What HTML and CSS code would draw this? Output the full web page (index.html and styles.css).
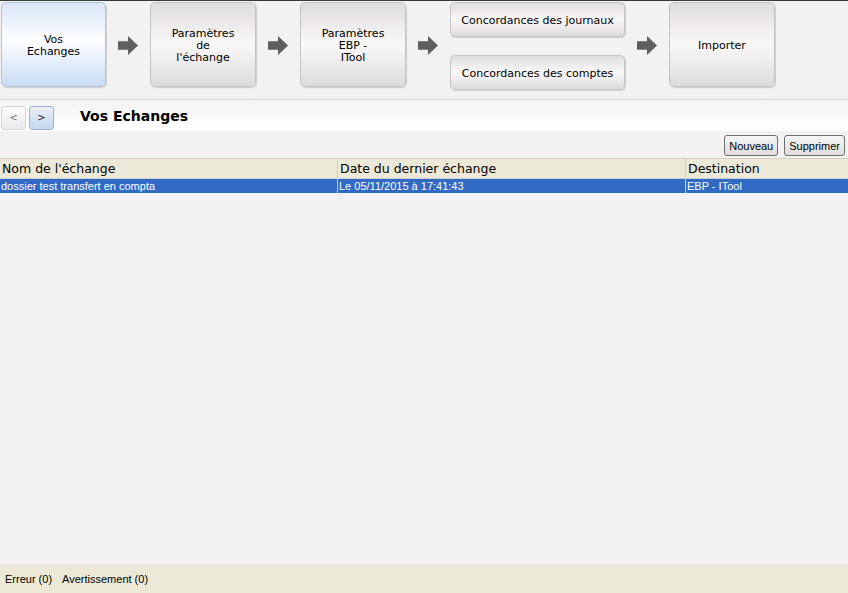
FILE: index.html
```html
<!DOCTYPE html>
<html lang="fr">
<head>
    <meta charset="UTF-8">
    <title>Vos Echanges</title>
    <link rel="stylesheet" href="styles.css">
</head>
<body>
    <div class="page">
        <div class="steps">
            <div class="step current">Vos<br>Echanges</div>
            <div class="arrow"></div>
            <div class="step">Paramètres<br>de<br>l'échange</div>
            <div class="arrow"></div>
            <div class="step">Paramètres<br>EBP -<br>ITool</div>
            <div class="arrow"></div>
            <div class="step-pair">
                <div class="step wide">Concordances des journaux</div>
                <div class="step wide">Concordances des comptes</div>
            </div>
            <div class="arrow"></div>
            <div class="step">Importer</div>
        </div>

        <div class="titlebar">
            <button class="nav">&lt;</button>
            <button class="nav active">&gt;</button>
            <h1>Vos Echanges</h1>
        </div>

        <div class="actions">
            <button class="btn">Nouveau</button>
            <button class="btn">Supprimer</button>
        </div>

        <table class="grid">
            <thead>
                <tr>
                    <th class="c1">Nom de l'échange</th>
                    <th class="c2">Date du dernier échange</th>
                    <th class="c3">Destination</th>
                </tr>
            </thead>
            <tbody>
                <tr class="selected">
                    <td>dossier test transfert en compta</td>
                    <td>Le 05/11/2015 à 17:41:43</td>
                    <td>EBP - ITool</td>
                </tr>
            </tbody>
        </table>

        <div class="spacer"></div>

        <div class="status">
            <span>Erreur (0)</span>
            <span>Avertissement (0)</span>
        </div>
    </div>
</body>
</html>
```

FILE: styles.css
```css
html, body {
    margin: 0;
    padding: 0;
    height: 100%;
}
body {
    background: #f2f2f2;
    font-family: "DejaVu Sans", Verdana, sans-serif;
    font-size: 11px;
    color: #000;
    overflow: hidden;
}
.page {
    display: flex;
    flex-direction: column;
    height: 593px;
    border-top: 1px solid #3a3a3a;
    box-sizing: border-box;
}

/* steps toolbar */
.steps {
    display: flex;
    align-items: flex-start;
    height: 99px;
    padding: 1px 0 0 0;
    box-sizing: border-box;
    border-bottom: 1px solid #d4d4d4;
}
.step {
    width: 106px;
    height: 85px;
    padding-top: 2px;
    box-sizing: border-box;
    border: 1px solid #c4c4c4;
    border-radius: 5px;
    background: linear-gradient(#dedede, #faf7f7 50%, #dcdcdc);
    box-shadow: 1px 1px 1px #cfcfcf;
    display: flex;
    align-items: center;
    justify-content: center;
    text-align: center;
    line-height: 12px;
    font-size: 11px;
}
.step.current {
    margin-left: 1px;
    width: 105px;
    background: linear-gradient(#d9e6f8, #fdfeff 45%, #c9dbf4);
    border-color: #b3c4da;
}
.step-pair {
    display: flex;
    flex-direction: column;
    gap: 18px;
}
.step.wide {
    width: 175px;
    height: 35px;
}
.arrow {
    width: 20px;
    height: 19px;
    margin: 34px 12px 0 12px;
    background: #5f5f5f;
    clip-path: polygon(0 28%, 50% 28%, 50% 0, 100% 50%, 50% 100%, 50% 72%, 0 72%);
}

/* title bar */
.titlebar {
    display: flex;
    align-items: center;
    height: 31px;
    padding: 5px 0 1px 0;
    box-sizing: border-box;
    background: linear-gradient(#f4f4f4, #ffffff);
}
.nav {
    width: 25px;
    height: 24px;
    margin-left: 1px;
    margin-right: 3px;
    padding: 0;
    border: 1px solid #d6d6d6;
    border-radius: 3px;
    background: linear-gradient(#fafafa, #ececec);
    font-family: "DejaVu Sans", Verdana, sans-serif;
    font-size: 10px;
    color: #777;
}
.nav.active {
    margin-left: 0;
    border-color: #9fb2cc;
    background: linear-gradient(#e7eef9, #c7d7ee);
    color: #222;
}
.titlebar h1 {
    margin: 0 0 4px 23px;
    font-size: 14px;
    font-weight: bold;
}

/* actions */
.actions {
    display: flex;
    justify-content: flex-end;
    gap: 6px;
    padding: 4px 3px 2px 0;
}
.btn {
    height: 21px;
    padding: 0 4px;
    border: 1px solid #707070;
    border-radius: 3px;
    background: linear-gradient(#f6f6f6, #dedede);
    font-family: "Liberation Sans", Arial, sans-serif;
    font-size: 11px;
    color: #000;
}

/* grid */
.grid {
    width: 100%;
    border-collapse: collapse;
    table-layout: fixed;
}
.grid th {
    background: #ece9d8;
    border: 1px solid #cfcfcf;
    font-weight: normal;
    font-size: 12.5px;
    text-align: left;
    height: 19px;
    padding: 0 1px 0 2px;
    white-space: nowrap;
    font-family: "DejaVu Sans", Verdana, sans-serif;
}
.grid th:first-child { border-left: none; }
.grid th:last-child { border-right: none; }
.c1 { width: 334px; }
.c2 { width: 344px; }
.grid td {
    height: 14px;
    padding: 0 1px;
    font-family: "Liberation Sans", Arial, sans-serif;
    font-size: 11px;
    white-space: nowrap;
    border-left: 1px solid #cfcfcf;
}
.grid td:first-child { border-left: none; }
.selected td {
    background: #316ac5;
    color: #fff;
}

.spacer {
    flex: 1;
}

/* status bar */
.status {
    height: 29px;
    background: #ece9d8;
    display: flex;
    align-items: center;
    gap: 10px;
    padding-left: 5px;
    font-family: "Liberation Sans", Arial, sans-serif;
    font-size: 11px;
}
```
